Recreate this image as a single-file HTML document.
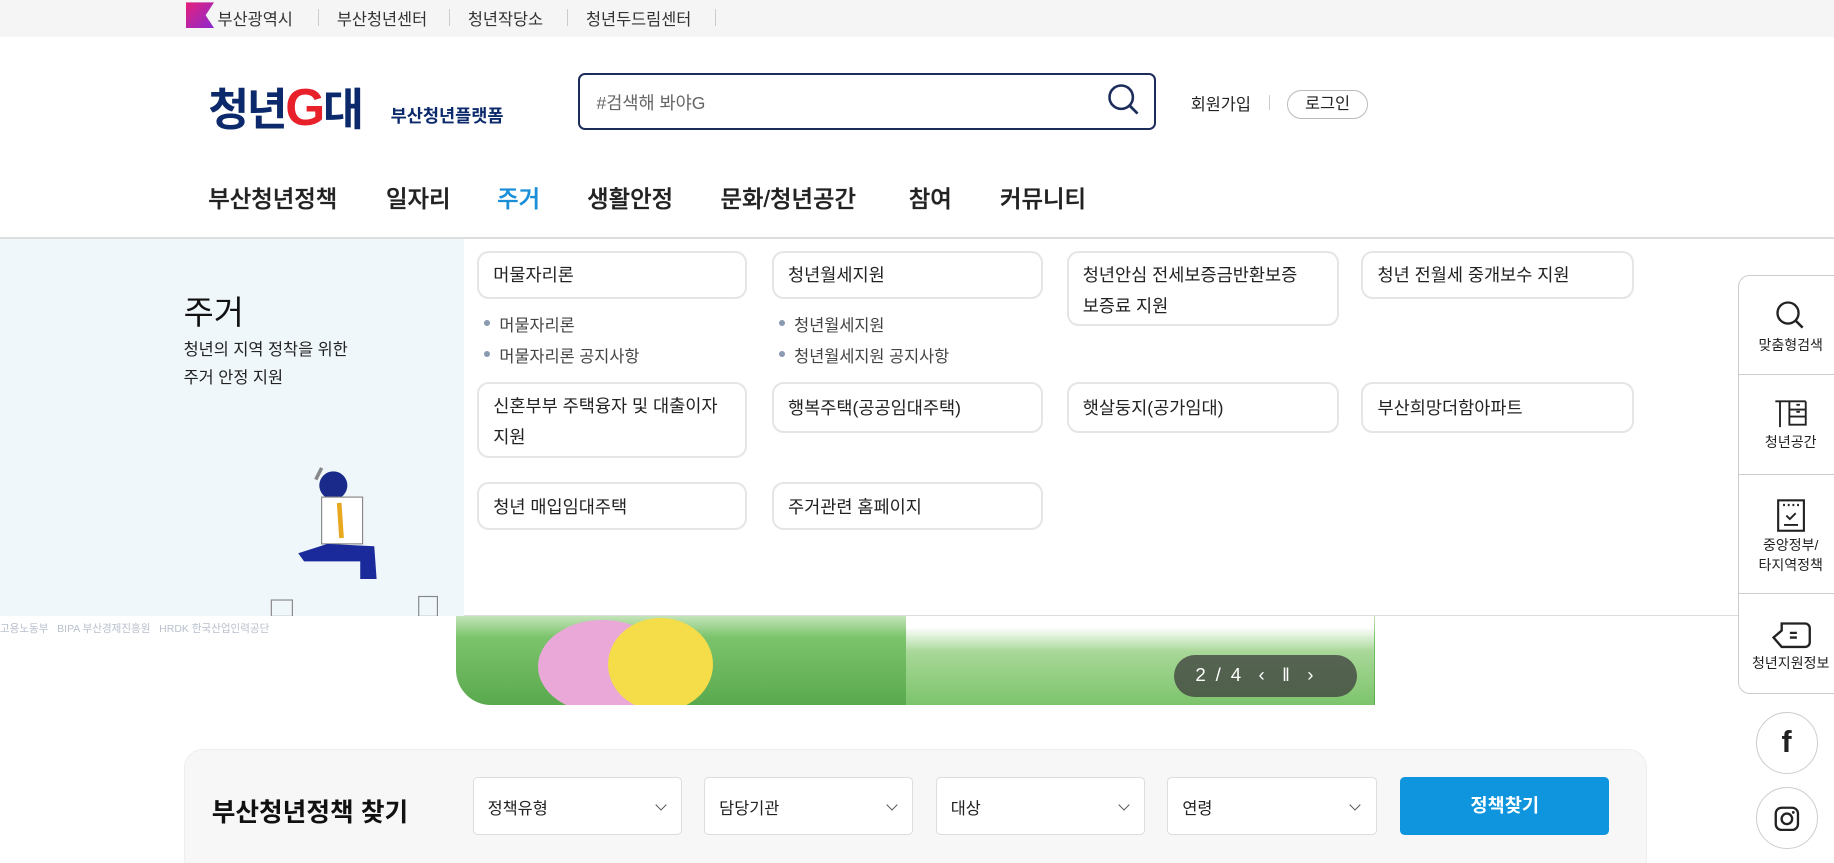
<!DOCTYPE html>
<html><head><meta charset="utf-8"><style>
*{box-sizing:border-box;margin:0;padding:0}
html,body{width:1834px;height:863px;overflow:hidden;background:#fff}
body{font-family:"Liberation Sans","Noto Sans CJK KR",sans-serif;color:#222;word-break:keep-all}
#w{width:1568px;height:738px;position:relative;zoom:1.16964;overflow:hidden}
.a{position:absolute}
.top{left:0;top:0;width:1568px;height:32px;background:#f5f5f5}
.sep{position:absolute;top:8px;width:1px;height:14px;background:#ccc}
.nav{position:absolute;top:154px;font-size:20px;color:#222;font-weight:500;-webkit-text-stroke:0.3px #222}
.card{position:absolute;background:#fff;border:2px solid #e5e5e5;border-radius:10px;font-size:15px;color:#222;padding:10px 12px;line-height:26px}
.li{position:absolute;font-size:14px;color:#444}
.li:before{content:"";position:absolute;left:-13px;top:7px;width:5px;height:5px;border-radius:50%;background:#8a9ab0}
.side{position:absolute;left:1486px;width:90px;text-align:center;font-size:12px;color:#222;border-bottom:1px solid #ccc}
.sel{position:absolute;top:664px;width:179px;height:50px;background:#fff;border:1px solid #ddd;border-radius:4px;font-size:14px;padding:15px 12px}
.sel:after{content:"";position:absolute;right:14px;top:20px;width:6px;height:6px;border-right:1.5px solid #555;border-bottom:1.5px solid #555;transform:rotate(45deg)}
</style></head><body><div id="w">
<div class="a top"></div>
<div class="a" style="left:159px;top:2px;width:24px;height:22px;background:linear-gradient(135deg,#e6207a,#8a2ad0);clip-path:polygon(0 0,100% 0,70% 50%,100% 100%,0 100%)"></div>
<div class="a" style="left:186px;top:5px;font-size:14px;color:#333">부산광역시</div>
<div class="sep" style="left:272px"></div>
<div class="a" style="left:288px;top:5px;font-size:14px;color:#333">부산청년센터</div>
<div class="sep" style="left:384px"></div>
<div class="a" style="left:400px;top:5px;font-size:14px;color:#333">청년작당소</div>
<div class="sep" style="left:485px"></div>
<div class="a" style="left:501px;top:5px;font-size:14px;color:#333">청년두드림센터</div>
<div class="sep" style="left:611px"></div>

<div class="a" style="left:178px;top:62px;font-size:38px;font-weight:bold;color:#0c2a6b;letter-spacing:-2px">청년<span style="color:#e8202a;font-size:44px">G</span>대</div>
<div class="a" style="left:334px;top:88px;font-size:15px;font-weight:bold;color:#0c2a6b">부산청년플랫폼</div>
<div class="a" style="left:494px;top:62px;width:494px;height:49px;border:2px solid #1c2d5c;border-radius:6px"></div>
<div class="a" style="left:510px;top:77px;font-size:15px;color:#666">#검색해 봐야G</div>
<svg class="a" style="left:946px;top:70px" width="30" height="30" viewBox="0 0 30 30"><circle cx="13" cy="13" r="10" fill="none" stroke="#1c2d5c" stroke-width="2.2"/><path d="M20 20l7 7" stroke="#1c2d5c" stroke-width="2.4"/></svg>
<div class="a" style="left:1018px;top:78px;font-size:14px">회원가입</div>
<div class="a" style="left:1085px;top:81px;width:1px;height:13px;background:#ccc"></div>
<div class="a" style="left:1100px;top:77px;width:70px;height:25px;border:1px solid #bbb;border-radius:13px;font-size:14px;text-align:center;line-height:23px">로그인</div>

<div class="nav" style="left:178px">부산청년정책</div>
<div class="nav" style="left:330px">일자리</div>
<div class="nav" style="left:425px;color:#1a8fd8;-webkit-text-stroke:0.3px #1a8fd8">주거</div>
<div class="nav" style="left:502px">생활안정</div>
<div class="nav" style="left:616px">문화/청년공간</div>
<div class="nav" style="left:777px">참여</div>
<div class="nav" style="left:855px">커뮤니티</div>
<div class="a" style="left:0;top:203px;width:1568px;height:1px;background:#ddd"></div>

<div class="a" style="left:0;top:527px;width:1568px;height:30px;background:#fff"></div>
<div class="a" style="left:0;top:531px;font-size:9px;color:#b8c0cc">고용노동부 &nbsp; BIPA 부산경제진흥원 &nbsp; HRDK 한국산업인력공단</div>
<div class="a" style="left:390px;top:520px;width:786px;height:83px;border-radius:0 0 0 30px;background:linear-gradient(#dff0d8,#7cc46c 30%,#5aa94e);overflow:hidden">
 <div class="a" style="left:70px;top:10px;width:110px;height:80px;border-radius:50%;background:#e9a8d8"></div>
 <div class="a" style="left:130px;top:8px;width:90px;height:80px;border-radius:50%;background:#f5dd4a"></div>
 <div class="a" style="left:385px;top:0;width:400px;height:83px;background:linear-gradient(#fff 20%,#a8d898 45%,#7cc46c)"></div>
</div>
<div class="a" style="left:1004px;top:560px;width:156px;height:36px;border-radius:18px;background:rgba(60,60,60,.75);color:#fff;font-size:16px;padding:8px 18px;letter-spacing:2px">2 / 4 &nbsp;‹ &nbsp;ǁ &nbsp;›</div>

<div class="a" style="left:0;top:204px;width:397px;height:323px;background:#eff7fb"></div>
<div class="a" style="left:397px;top:204px;width:1171px;height:323px;background:#fff;border-bottom:1px solid #ddd"></div>
<div class="a" style="left:157px;top:245px;font-size:28px;color:#111">주거</div>
<div class="a" style="left:157px;top:287px;font-size:14px;line-height:24px;color:#222">청년의 지역 정착을 위한<br>주거 안정 지원</div>
<svg class="a" style="left:230px;top:395px" width="150" height="132" viewBox="0 0 150 132"><circle cx="55" cy="20" r="12" fill="#1a2a8a"/><rect x="45" y="30" width="35" height="40" fill="#fff" stroke="#888"/><path d="M60 35 L62 65" stroke="#e8a820" stroke-width="4"/><path d="M50 70 L90 72 L92 100 L78 100 L78 85 L30 85 L25 78 Z" fill="#1a2a9a"/><path d="M40 15 L45 5" stroke="#888" stroke-width="3"/><rect x="2" y="118" width="18" height="14" fill="none" stroke="#888"/><rect x="128" y="115" width="16" height="17" fill="none" stroke="#888"/></svg>

<div class="card" style="left:408px;top:215px;width:231px;height:41px;padding-top:6px">머물자리론</div>
<div class="card" style="left:660px;top:215px;width:232px;height:41px;padding-top:6px">청년월세지원</div>
<div class="card" style="left:912px;top:215px;width:233px;height:64px;padding-top:6px">청년안심 전세보증금반환보증 보증료 지원</div>
<div class="card" style="left:1164px;top:215px;width:233px;height:41px;padding-top:6px">청년 전월세 중개보수 지원</div>
<div class="li" style="left:427px;top:267px">머물자리론</div>
<div class="li" style="left:427px;top:293px">머물자리론 공지사항</div>
<div class="li" style="left:679px;top:267px">청년월세지원</div>
<div class="li" style="left:679px;top:293px">청년월세지원 공지사항</div>
<div class="card" style="left:408px;top:327px;width:231px;height:65px;padding-top:6px">신혼부부 주택융자 및 대출이자 지원</div>
<div class="card" style="left:660px;top:327px;width:232px;height:43px;padding-top:7px">행복주택(공공임대주택)</div>
<div class="card" style="left:912px;top:327px;width:233px;height:43px;padding-top:7px">햇살둥지(공가임대)</div>
<div class="card" style="left:1164px;top:327px;width:233px;height:43px;padding-top:7px">부산희망더함아파트</div>
<div class="card" style="left:408px;top:412px;width:231px;height:41px;padding-top:7px">청년 매입임대주택</div>
<div class="card" style="left:660px;top:412px;width:232px;height:41px;padding-top:7px">주거관련 홈페이지</div>

<div class="a" style="left:1486px;top:235px;width:90px;height:358px;background:#fff;border:1px solid #ccc;border-radius:10px 0 0 10px"></div>
<div class="side" style="top:236px;height:85px;padding-top:20px"><svg width="28" height="28" viewBox="0 0 28 28"><circle cx="12" cy="12" r="9" fill="none" stroke="#222" stroke-width="2"/><path d="M18.5 18.5l6 6" stroke="#222" stroke-width="2.2"/></svg><div>맞춤형검색</div></div>
<div class="side" style="top:321px;height:85px;padding-top:20px"><svg width="30" height="26" viewBox="0 0 30 26"><path d="M2 2h26M6 2v22M14 2v20h14V2M14 9h14M14 15h14M20 5h3M20 11h3" fill="none" stroke="#222" stroke-width="1.6"/></svg><div>청년공간</div></div>
<div class="side" style="top:406px;height:102px;padding-top:20px"><svg width="24" height="30" viewBox="0 0 24 30"><rect x="1" y="2" width="22" height="26" fill="none" stroke="#222" stroke-width="1.8"/><path d="M6 5v2M10 5v2M14 5v2M18 5v2M8 15l3 3 5-5M6 23h12" fill="none" stroke="#222" stroke-width="1.6"/></svg><div style="line-height:17px">중앙정부/<br>타지역정책</div></div>
<div class="side" style="top:508px;height:85px;padding-top:22px;border-bottom:none"><svg width="36" height="26" viewBox="0 0 36 26"><path d="M10 3h20a4 4 0 0 1 4 4v12a4 4 0 0 1-4 4H10l-7-8 7-6z" fill="none" stroke="#222" stroke-width="2"/><path d="M17 11h6M17 15h6" stroke="#222" stroke-width="2"/></svg><div>청년지원정보</div></div>
<div class="a" style="left:1501px;top:609px;width:53px;height:53px;border:1px solid #ccc;border-radius:50%;background:#fff;text-align:center;font-size:26px;font-weight:bold;line-height:51px;color:#222">f</div>
<div class="a" style="left:1501px;top:673px;width:53px;height:53px;border:1px solid #ccc;border-radius:50%;background:#fff"><svg style="margin:15px" width="22" height="22" viewBox="0 0 22 22"><rect x="1.5" y="1.5" width="19" height="19" rx="5" fill="none" stroke="#222" stroke-width="2"/><circle cx="11" cy="11" r="4.5" fill="none" stroke="#222" stroke-width="2"/><circle cx="16.5" cy="5.5" r="1.2" fill="#222"/></svg></div>

<div class="a" style="left:157px;top:640px;width:1251px;height:110px;background:#f7f7f7;border:1px solid #eee;border-radius:16px"></div>
<div class="a" style="left:181px;top:677px;font-size:22px;font-weight:bold;color:#111">부산청년정책 찾기</div>
<div class="sel" style="left:404px">정책유형</div>
<div class="sel" style="left:602px">담당기관</div>
<div class="sel" style="left:800px">대상</div>
<div class="sel" style="left:998px">연령</div>
<div class="a" style="left:1197px;top:664px;width:179px;height:50px;background:#0f95de;border-radius:4px;color:#fff;font-size:16px;font-weight:bold;text-align:center;line-height:50px">정책찾기</div>
</div></body></html>
